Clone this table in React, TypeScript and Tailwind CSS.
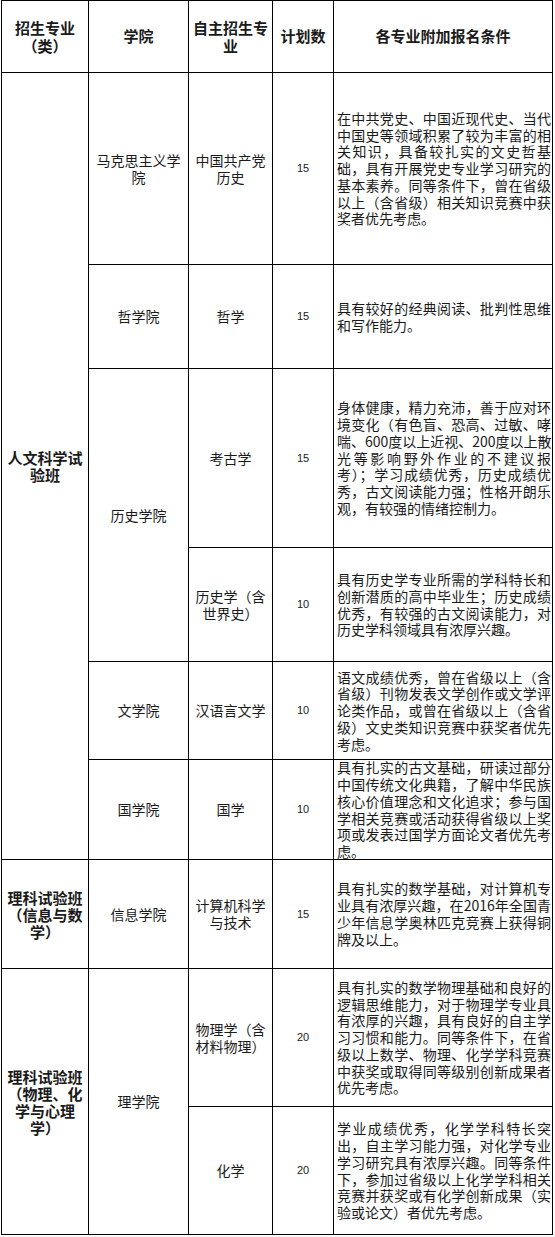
import React from "react";

type Row = {
  row: string;
  major: string[];
  n: string;
  text: string[];
};

const rows: Row[] = [
  {
    row: "row-start-2",
    major: ["中国共产党", "历史"],
    n: "15",
    text: [
      "在中共党史、中国近现代史、当代",
      "中国史等领域积累了较为丰富的相",
      "关知识，具备较扎实的文史哲基",
      "础，具有开展党史专业学习研究的",
      "基本素养。同等条件下，曾在省级",
      "以上（含省级）相关知识竞赛中获",
      "奖者优先考虑。",
    ],
  },
  {
    row: "row-start-3",
    major: ["哲学"],
    n: "15",
    text: ["具有较好的经典阅读、批判性思维", "和写作能力。"],
  },
  {
    row: "row-start-4",
    major: ["考古学"],
    n: "15",
    text: [
      "身体健康，精力充沛，善于应对环",
      "境变化（有色盲、恐高、过敏、哮",
      "喘、600度以上近视、200度以上散",
      "光等影响野外作业的不建议报",
      "考）；学习成绩优秀，历史成绩优",
      "秀，古文阅读能力强；性格开朗乐",
      "观，有较强的情绪控制力。",
    ],
  },
  {
    row: "row-start-5",
    major: ["历史学（含", "世界史）"],
    n: "10",
    text: [
      "具有历史学专业所需的学科特长和",
      "创新潜质的高中毕业生；历史成绩",
      "优秀，有较强的古文阅读能力，对",
      "历史学科领域具有浓厚兴趣。",
    ],
  },
  {
    row: "row-start-6",
    major: ["汉语言文学"],
    n: "10",
    text: [
      "语文成绩优秀，曾在省级以上（含",
      "省级）刊物发表文学创作或文学评",
      "论类作品，或曾在省级以上（含省",
      "级）文史类知识竞赛中获奖者优先",
      "考虑。",
    ],
  },
  {
    row: "row-start-7",
    major: ["国学"],
    n: "10",
    text: [
      "具有扎实的古文基础，研读过部分",
      "中国传统文化典籍，了解中华民族",
      "核心价值理念和文化追求；参与国",
      "学相关竞赛或活动获得省级以上奖",
      "项或发表过国学方面论文者优先考",
      "虑。",
    ],
  },
  {
    row: "row-start-8",
    major: ["计算机科学", "与技术"],
    n: "15",
    text: [
      "具有扎实的数学基础，对计算机专",
      "业具有浓厚兴趣，在2016年全国青",
      "少年信息学奥林匹克竞赛上获得铜",
      "牌及以上。",
    ],
  },
  {
    row: "row-start-9",
    major: ["物理学（含", "材料物理）"],
    n: "20",
    text: [
      "具有扎实的数学物理基础和良好的",
      "逻辑思维能力，对于物理学专业具",
      "有浓厚的兴趣，具有良好的自主学",
      "习习惯和能力。同等条件下，在省",
      "级以上数学、物理、化学学科竞赛",
      "中获奖或取得同等级别创新成果者",
      "优先考虑。",
    ],
  },
  {
    row: "row-start-10",
    major: ["化学"],
    n: "20",
    text: [
      "学业成绩优秀，化学学科特长突",
      "出，自主学习能力强，对化学专业",
      "学习研究具有浓厚兴趣。同等条件",
      "下，参加过省级以上化学学科相关",
      "竞赛并获奖或有化学创新成果（实",
      "验或论文）者优先考虑。",
    ],
  },
];

function Lines({ lines }: { lines: string[] }) {
  return (
    <>
      {lines.map((l, i) => (
        <div key={i}>{l}</div>
      ))}
    </>
  );
}

function Cell({ className, children }: { className: string; children: React.ReactNode }) {
  return (
    <div className={`bg-white flex flex-col items-center justify-center text-center ${className}`}>
      {children}
    </div>
  );
}

export default function App() {
  return (
    <div className="bg-white w-[555px] min-h-[1237px] font-['Noto_Sans_CJK_SC',sans-serif] text-[#1a1a1a]">
      <div className="ml-[1px] w-[552px] grid grid-cols-[86px_99px_83px_60px_218px] grid-rows-[71px_191px_103px_178px_113px_97px_99px_108px_137px_127px] gap-px bg-black p-px text-[14px] leading-[16.8px]">
        {/* header */}
        <Cell className="col-start-1 row-start-1 font-bold text-[15px] leading-[18px]">
          <Lines lines={["招生专业", "（类）"]} />
        </Cell>
        <Cell className="col-start-2 row-start-1 font-bold text-[15px]">学院</Cell>
        <Cell className="col-start-3 row-start-1 font-bold text-[15px] leading-[18px]">
          <Lines lines={["自主招生专", "业"]} />
        </Cell>
        <Cell className="col-start-4 row-start-1 font-bold text-[15px]">计划数</Cell>
        <Cell className="col-start-5 row-start-1 font-bold text-[15px]">各专业附加报名条件</Cell>

        {/* first column */}
        <Cell className="col-start-1 row-start-2 row-span-6 font-bold text-[15px] leading-[17px]">
          <Lines lines={["人文科学试", "验班"]} />
        </Cell>
        <Cell className="col-start-1 row-start-8 font-bold text-[15px] leading-[17px]">
          <Lines lines={["理科试验班", "（信息与数", "学）"]} />
        </Cell>
        <Cell className="col-start-1 row-start-9 row-span-2 font-bold text-[15px] leading-[17px]">
          <Lines lines={["理科试验班", "（物理、化", "学与心理", "学）"]} />
        </Cell>

        {/* second column */}
        <Cell className="col-start-2 row-start-2">
          <Lines lines={["马克思主义学", "院"]} />
        </Cell>
        <Cell className="col-start-2 row-start-3">哲学院</Cell>
        <Cell className="col-start-2 row-start-4 row-span-2">历史学院</Cell>
        <Cell className="col-start-2 row-start-6">文学院</Cell>
        <Cell className="col-start-2 row-start-7">国学院</Cell>
        <Cell className="col-start-2 row-start-8">信息学院</Cell>
        <Cell className="col-start-2 row-start-9 row-span-2">理学院</Cell>

        {rows.map((r) => (
          <React.Fragment key={r.row}>
            <Cell className={`col-start-3 ${r.row}`}>
              <Lines lines={r.major} />
            </Cell>
            <Cell className={`col-start-4 ${r.row} font-['Liberation_Sans',sans-serif] text-[11px]`}>
              {r.n}
            </Cell>
            <div className={`col-start-5 ${r.row} bg-white flex flex-col justify-center pl-[3px] pr-[1px] text-left`}>
              {r.text.map((l, i) => (
                <div
                  key={i}
                  className={
                    i < r.text.length - 1
                      ? "text-justify [text-align-last:justify] whitespace-nowrap"
                      : "text-left whitespace-nowrap"
                  }
                >
                  {l}
                </div>
              ))}
            </div>
          </React.Fragment>
        ))}
      </div>
    </div>
  );
}
